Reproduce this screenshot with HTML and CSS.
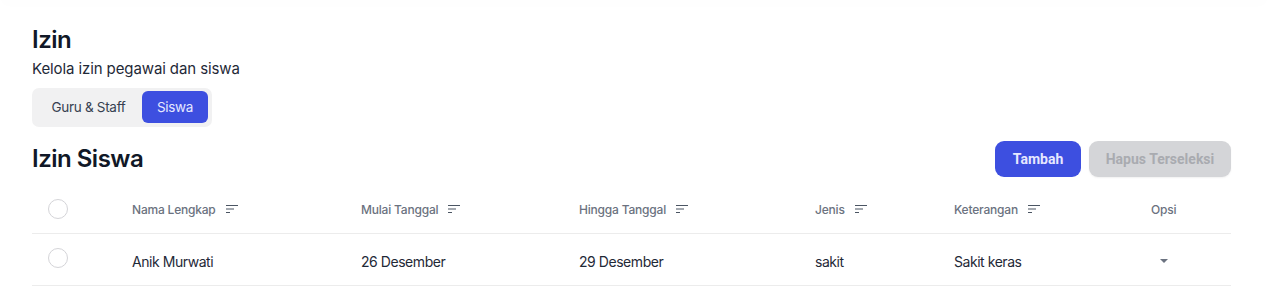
FILE: index.html
```html
<!DOCTYPE html>
<html>
<head>
<meta charset="utf-8">
<link rel="stylesheet" href="styles.css">
</head>
<body>
<div class="topbar"></div>
<main class="page">
  <h1 class="title">Izin</h1>
  <p class="subtitle">Kelola izin pegawai dan siswa</p>
  <div class="tabs">
    <button class="tab">Guru &amp; Staff</button>
    <button class="tab active">Siswa</button>
  </div>
  <div class="section-head">
    <h2 class="section-title">Izin Siswa</h2>
    <div class="actions">
      <button class="btn primary">Tambah</button>
      <button class="btn disabled">Hapus Terseleksi</button>
    </div>
  </div>
  <div class="table">
    <div class="row head">
      <div class="cell"><span class="check"></span></div>
      <div class="cell">Nama Lengkap <svg class="sort" viewBox="0 0 12 8"><path d="M0 .5h12M0 4h8M0 7.5h4" stroke="currentColor" stroke-width="1"/></svg></div>
      <div class="cell">Mulai Tanggal <svg class="sort" viewBox="0 0 12 8"><path d="M0 .5h12M0 4h8M0 7.5h4" stroke="currentColor" stroke-width="1"/></svg></div>
      <div class="cell">Hingga Tanggal <svg class="sort" viewBox="0 0 12 8"><path d="M0 .5h12M0 4h8M0 7.5h4" stroke="currentColor" stroke-width="1"/></svg></div>
      <div class="cell">Jenis <svg class="sort" viewBox="0 0 12 8"><path d="M0 .5h12M0 4h8M0 7.5h4" stroke="currentColor" stroke-width="1"/></svg></div>
      <div class="cell">Keterangan <svg class="sort" viewBox="0 0 12 8"><path d="M0 .5h12M0 4h8M0 7.5h4" stroke="currentColor" stroke-width="1"/></svg></div>
      <div class="cell opsi">Opsi</div>
    </div>
    <div class="row body">
      <div class="cell"><span class="check"></span></div>
      <div class="cell">Anik Murwati</div>
      <div class="cell">26 Desember</div>
      <div class="cell">29 Desember</div>
      <div class="cell">sakit</div>
      <div class="cell">Sakit keras</div>
      <div class="cell opsi"><span class="caret"></span></div>
    </div>
  </div>
</main>
</body>
</html>
```
FILE: styles.css
```css
* { box-sizing: border-box; }
html, body { margin: 0; padding: 0; background: #fff; }
body { font-family: Inter, "Noto Sans", sans-serif; color: #111827; }
.topbar { height: 1px; margin-top: -1px; box-shadow: 0 0 14px rgba(0,0,0,0.10); }
.page { padding: 25px 37px 0 32px; }
.title { margin: 0; font-size: 24px; font-weight: 600; line-height: 30px; letter-spacing: -0.5px; }
.subtitle { margin: 4px 0 0; font-size: 15px; line-height: 20px; color: #1f2937; letter-spacing: -0.1px; }
.tabs { display: inline-flex; margin-top: 9px; padding: 3px 4px 4px 3px; background: #f1f1f2; border-radius: 7px; }
.tab { border: 0; background: transparent; font-family: Inter, sans-serif; font-size: 13.5px; letter-spacing: -0.3px; color: #374151; padding: 0; height: 32px; border-radius: 6px; width: 107px; white-space: nowrap; }
.tab.active { background: #3d4fe0; color: #e6e8ff; width: 66px; }
.section-head { display: flex; align-items: center; justify-content: space-between; margin-top: 14px; }
.section-title { margin: 0; font-size: 24px; font-weight: 600; line-height: 36px; letter-spacing: -0.5px; }
.actions { display: flex; gap: 8px; }
.btn { border: 0; height: 36px; border-radius: 9px; font-family: Roboto, sans-serif; font-weight: 700; font-size: 14px; padding: 0; white-space: nowrap; }
.btn.primary { background: #3d4fe0; color: #e6e8ff; width: 86px; }
.btn.disabled { background: #d4d5d8; color: #a9abb0; width: 142px; box-shadow: 0 1px 2px rgba(0,0,0,0.06); }
.table { margin-top: 8px; }
.row { display: grid; grid-template-columns: 84px 229px 218px 236px 139px 197px 96px; border-bottom: 1px solid #ececec; align-items: center; }
.row.head { height: 49px; font-size: 12px; color: #6b7280; font-weight: 500; letter-spacing: -0.2px; }
.row.body { height: 52px; font-size: 14px; color: #1f2937; letter-spacing: -0.45px; padding-top: 3px; }
.cell { padding-left: 16px; display: flex; align-items: center; }
.sort { width: 12px; height: 8px; margin-left: 10px; color: #4b5563; }
.check { width: 20px; height: 20px; border: 1px solid #d4d4d8; border-radius: 50%; display: inline-block; }
.row.body .check { margin-top: -6px; }
.caret { display: inline-block; margin-left: 9px; width: 0; height: 0; border-left: 4px solid transparent; border-right: 4px solid transparent; border-top: 4px solid #6b7280; }
```
